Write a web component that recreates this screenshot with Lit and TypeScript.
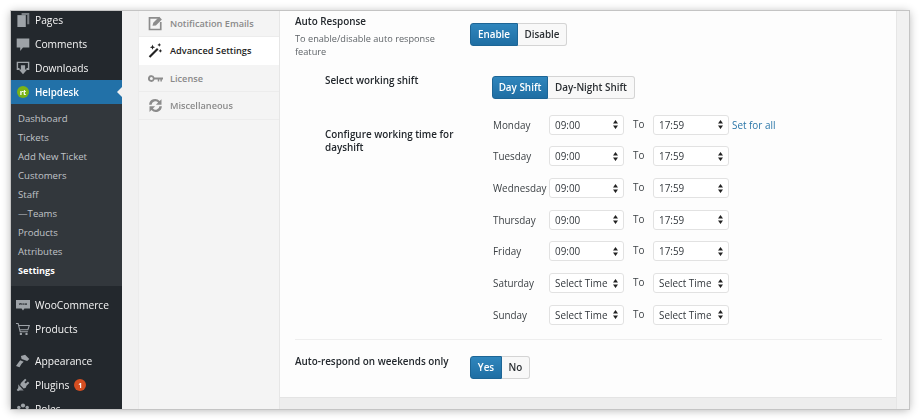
import { LitElement, html, css, svg } from "lit";
import { customElement } from "lit/decorators.js";

const icons: Record<string, unknown> = {
  pages: svg`<path d="M8 0h11v16h-3V3H8z" opacity=".7"/><path d="M2 3h12v17H2z"/>`,
  comments: svg`<path d="M1 2h18v13h-9l-4 5v-5H1z"/>`,
  downloads: svg`<path d="M1 1h18v12h-4v-3h2V3H3v7h2v3H1z"/><path d="M7 6h6v6h3l-6 7-6-7h3z"/>`,
  woo: svg`<path d="M0 3h20v12h-8l-2 3-2-3H0z"/>`,
  cart: svg`<path fill="none" stroke="currentColor" stroke-width="1.500" d="M0 2h3l3 12h11M4 5h15l-2 6H6"/><circle cx="7" cy="17" r="1.700"/><circle cx="15" cy="17" r="1.700"/>`,
  brush: svg`<path d="M7 3l6-2 6 6-3 3-3-1-5-2zM6 9l5 2-3 3-3 5-5-2 3-4z"/>`,
  plugin: svg`<path d="M13 1l2 2-3 3 2 2 3-3 2 2-4 4-1 3-3 1-5-5 1-3zM5 12l3 3-5 4-2-2z"/><path d="M3 9l8 9H3z" opacity=".8"/>`,
  roles: svg`<circle cx="10" cy="5" r="3"/><circle cx="4" cy="8" r="2.500"/><circle cx="16" cy="8" r="2.500"/><path d="M5 18v-5l3-3h4l3 3v5z"/>`,
  notif: svg`<path fill="none" stroke="currentColor" stroke-width="2.200" d="M15 2.500H2V18h15V8"/><path d="M7 9l8-8 3.500 3.500-8 8L6 13z"/>`,
  wand: svg`<path d="M1 17.500L12 6.500l2 2L3 19.500z"/><path d="M6 2l1 2.500 2.500 1-2.500 1-1 2.500-1-2.500-2.500-1 2.500-1zM15 0l.8 1.700 1.700.8-1.700.8-.8 1.700-.8-1.700-1.700-.8 1.700-.8zM16.500 8l.8 1.700 1.700.8-1.700.8-.8 1.700-.8-1.700-1.700-.8 1.700-.8z"/>`,
  key: svg`<path fill-rule="evenodd" d="M4.500 5.500a4.500 4.500 0 0 1 4.200 3H20v2.800h-1.500V14h-2v-2.700H15V14h-2v-2.700H8.700A4.500 4.500 0 1 1 4.500 5.500zm0 2.500a2 2 0 1 0 0 4 2 2 0 0 0 0-4z"/>`,
  sync: svg`<path d="M1.500 9a8 8 0 0 1 14-5L18 1.500V9h-7.500l3-3a5 5 0 0 0-8.700 3zM18.500 11a8 8 0 0 1-14 5L2 18.500V11h7.500l-3 3a5 5 0 0 0 8.700-3z"/>`,
};

const icon = (n: string) => html`<svg class="icon" viewBox="0 0 20 20" fill="currentColor">${icons[n]}</svg>`;

const DAYS = [
  ["Monday", "09:00", "17:59"],
  ["Tuesday", "09:00", "17:59"],
  ["Wednesday", "09:00", "17:59"],
  ["Thursday", "09:00", "17:59"],
  ["Friday", "09:00", "17:59"],
  ["Saturday", "Select Time", "Select Time"],
  ["Sunday", "Select Time", "Select Time"],
];

const SUB = ["Dashboard", "Tickets", "Add New Ticket", "Customers", "Staff", "—Teams", "Products", "Attributes", "Settings"];

const TABS = [
  ["notif", "Notification Emails"],
  ["wand", "Advanced Settings"],
  ["key", "License"],
  ["sync", "Miscellaneous"],
];

@customElement("app-root")
export class AppRoot extends LitElement {
  static styles = css`
    :host { display: block; width: 920px; height: 420px; background: #fff; font-family: "Open Sans", "Liberation Sans", sans-serif; overflow: hidden; }
    * { box-sizing: border-box; }
    .page { padding: 11px; height: 420px; }
    .window { display: flex; width: 898px; height: 398px; overflow: hidden; background: #f1f1f1; box-shadow: 0 0 0 1px #c4c4c4, 0 1px 9px rgba(0,0,0,.32); filter: blur(.4px); }

    .side { width: 111px; flex: none; background: #23282d; color: #f4f4f4; font-size: 10.25px; font-weight: 400; overflow: hidden; }
    .menu { margin-top: -3px; }
    .item { height: 24px; display: flex; align-items: center; gap: 5px; padding-left: 5px; position: relative; }
    .item .icon { width: 14px; height: 14px; color: #9ea3a8; flex: none; }
    .item.current { background: #2271a8; color: #fff; font-weight: 600; font-size: 9.8px; }
    .item.current::after { content: ""; position: absolute; right: 0; top: 7px; border: 5px solid transparent; border-right-color: #f1f1f1; border-left-width: 0; }
    .logo { width: 12px; height: 12px; margin: 0 1px; border-radius: 50%; background: #7ab317; color: #fff; font-size: 7.5px; font-weight: 700; display: flex; align-items: center; justify-content: center; flex: none; }
    .sub { background: #32373c; padding: 5px 0 6px 7px; font-size: 9.6px; font-weight: 400; color: #c0c4c8; }
    .sub div { height: 19px; line-height: 19px; }
    .sub .on { color: #fff; font-weight: 700; font-size: 9.15px; }
    .sep-a { height: 7px; }
    .sep-b { height: 8px; }
    .badge { width: 12px; height: 12px; border-radius: 50%; background: #d54e21; color: #fff; font-size: 7px; font-weight: 700; display: flex; align-items: center; justify-content: center; }
    .woo-mark { position: absolute; left: 5px; top: 5px; width: 14px; text-align: center; font-size: 4px; line-height: 11px; font-weight: 700; color: #23282d; }

    .gutter { width: 17px; flex: none; }
    .tabs { width: 142px; flex: none; background: #f4f4f4; border-left: 1px solid #ececec; border-right: 1px solid #e6e6e6; font-size: 9.2px; font-weight: 600; color: #8a8a8a; margin-left: -1px; }
    .tab { height: 27.6px; display: flex; align-items: center; gap: 7px; padding: 1px 0 0 9px; border-bottom: 1px solid #ececec; }
    .tab:first-child { height: 26px; padding-top: 0; }
    .tab .icon { width: 15px; height: 15px; flex: none; color: #8c8c8c; }
    .tab.on { background: #fff; color: #222; border-bottom-color: #fff; }
    .tab.on .icon { color: #222; }

    .main { flex: 1; display: flex; flex-direction: column; min-width: 0; }
    .content { height: 386px; background: #fdfdfd; padding: 4px 14px 0 15px; color: #32373c; font-size: 9.9px; }
    .foot { flex: 1; background: #ededed; border-top: 1px solid #e4e4e4; }
    .strip { width: 13px; flex: none; background: #f1f1f1; border-left: 1px solid #e6e6e6; }

    .row { display: flex; }
    .label { font-weight: 600; color: #23282d; line-height: 13px; }
    .r1 { height: 60px; }
    .r1 .col { width: 175px; flex: none; }
    .desc { color: #5f6468; font-weight: 400; font-size: 9.2px; line-height: 13px; margin-top: 4px; width: 160px; }
    .group { display: inline-flex; height: 23px; margin-top: 8px; border-radius: 3px; font-weight: 600; }
    .btn { display: flex; align-items: center; justify-content: center; padding-bottom: 2px; border: 1px solid #d4d4d4; border-left-width: 0; background: #f8f8f8; color: #2b2f33; }
    .btn:last-child { border-radius: 0 3px 3px 0; }
    .btn.on { background: linear-gradient(#2f86bd, #1f6ea3); color: #fff; border: 1px solid #1d6595; border-radius: 3px 0 0 3px; }
    .r2 { height: 40px; padding-left: 30px; }
    .r2 .label { width: 167px; flex: none; margin-top: -1px; }
    .r2 .group { margin-top: 1px; }
    .r3 { padding-left: 30px; height: 224px; }
    .r3 > .label { padding-top: 13px; width: 143px; margin-right: 24px; flex: none; }
    .days { display: grid; grid-template-columns: 57px 75px 29px 76px auto; grid-auto-rows: 31.65px; align-items: center; justify-items: start; margin-top: -6px; }
    .day { color: #3c4145; padding-left: 1px; white-space: nowrap; }
    .to { padding-left: 9px; margin-top: -2px; color: #3c4145; }
    .sel { width: 100%; height: 20px; border: 1px solid #e2e2e2; border-radius: 3px; background: #fff; padding: 0 5px; display: flex; align-items: center; justify-content: space-between; color: #32373c; }
    .sel svg { width: 5px; height: 9px; }
    .link { color: #2a76a8; padding-left: 3px; }
    hr { border: 0; border-top: 1px solid #eee; margin: 0; }
    .r4 { padding-top: 16px; }
    .r4 .label { width: 175px; flex: none; white-space: nowrap; margin-top: -1px; }
    .r4 .group { margin-top: 0; }
  `;

  private group(a: string, b: string, wa: number, wb: number) {
    return html`<div class="group">
      <div class="btn on" style="width:${wa}px">${a}</div>
      <div class="btn" style="width:${wb}px">${b}</div>
    </div>`;
  }

  private sel(v: string) {
    return html`<div class="sel">${v}<svg viewBox="0 0 5 9" fill="#222"><path d="M2.500 0L5 3.500H0zM0 5.500h5L2.500 9z"/></svg></div>`;
  }

  render() {
    return html`<div class="page"><div class="window">
      <nav class="side"><div class="menu">
        <div class="item">${icon("pages")}Pages</div>
        <div class="item">${icon("comments")}Comments</div>
        <div class="item">${icon("downloads")}Downloads</div>
        <div class="item current"><span class="logo">rt</span>Helpdesk</div>
        <div class="sub">${SUB.map((s) => html`<div class=${s === "Settings" ? "on" : ""}>${s}</div>`)}</div>
        <div class="sep-a"></div>
        <div class="item">${icon("woo")}<span class="woo-mark">woo</span>WooCommerce</div>
        <div class="item">${icon("cart")}Products</div>
        <div class="sep-b"></div>
        <div class="item">${icon("brush")}Appearance</div>
        <div class="item">${icon("plugin")}Plugins<span class="badge">1</span></div>
        <div class="item">${icon("roles")}Roles</div>
      </div></nav>
      <div class="gutter"></div>
      <div class="tabs">
        ${TABS.map(([i, t], n) => html`<div class="tab ${n === 1 ? "on" : ""}">${icon(i)}${t}</div>`)}
      </div>
      <div class="main">
        <div class="content">
          <div class="row r1">
            <div class="col">
              <div class="label">Auto Response</div>
              <div class="desc">To enable/disable auto response feature</div>
            </div>
            ${this.group("Enable", "Disable", 48, 49)}
          </div>
          <div class="row r2">
            <div class="label">Select working shift</div>
            ${this.group("Day Shift", "Day-Night Shift", 56, 87)}
          </div>
          <div class="row r3">
            <div class="label">Configure working time for dayshift</div>
            <div class="days">
              ${DAYS.map(([d, a, b], i) => html`
                <div class="day">${d}</div>
                ${this.sel(a)}
                <div class="to">To</div>
                ${this.sel(b)}
                ${i === 0 ? html`<div class="link">Set for all</div>` : html`<div></div>`}
              `)}
            </div>
          </div>
          <hr />
          <div class="row r4">
            <div class="label">Auto-respond on weekends only</div>
            ${this.group("Yes", "No", 32, 28)}
          </div>
        </div>
        <div class="foot"></div>
      </div>
      <div class="strip"></div>
    </div></div>`;
  }
}
